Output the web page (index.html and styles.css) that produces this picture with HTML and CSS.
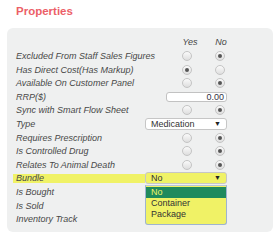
FILE: index.html
```html
<!DOCTYPE html>
<html lang="en">
<head>
    <meta charset="UTF-8">
    <meta name="viewport" content="width=device-width, initial-scale=1.0">
    <title>Properties</title>
    <link rel="stylesheet" href="styles.css">
</head>
<body>
    <h2 class="title">Properties</h2>
    <div class="panel">
        <div class="row head">
            <span class="hd yes">Yes</span>
            <span class="hd no">No</span>
        </div>
        <div class="row">
            <span class="label">Excluded From Staff Sales Figures</span>
            <span class="radio yes"></span>
            <span class="radio no on"></span>
        </div>
        <div class="row">
            <span class="label">Has Direct Cost(Has Markup)</span>
            <span class="radio yes on"></span>
            <span class="radio no"></span>
        </div>
        <div class="row">
            <span class="label">Available On Customer Panel</span>
            <span class="radio yes"></span>
            <span class="radio no on"></span>
        </div>
        <div class="row">
            <span class="label">RRP($)</span>
            <span class="num">0.00</span>
        </div>
        <div class="row">
            <span class="label">Sync with Smart Flow Sheet</span>
            <span class="radio yes"></span>
            <span class="radio no on"></span>
        </div>
        <div class="row">
            <span class="label">Type</span>
            <span class="sel">Medication <i class="arrow">&#9660;</i></span>
        </div>
        <div class="row">
            <span class="label">Requires Prescription</span>
            <span class="radio yes"></span>
            <span class="radio no on"></span>
        </div>
        <div class="row">
            <span class="label">Is Controlled Drug</span>
            <span class="radio yes"></span>
            <span class="radio no on"></span>
        </div>
        <div class="row">
            <span class="label">Relates To Animal Death</span>
            <span class="radio yes"></span>
            <span class="radio no on"></span>
        </div>
        <div class="row">
            <span class="label mark">Bundle</span>
            <span class="sel mark">No <i class="arrow">&#9660;</i>
                <span class="list">
                    <span class="opt picked">No</span>
                    <span class="opt">Container</span>
                    <span class="opt">Package</span>
                </span>
            </span>
        </div>
        <div class="row">
            <span class="label">Is Bought</span>
        </div>
        <div class="row">
            <span class="label">Is Sold</span>
        </div>
        <div class="row">
            <span class="label">Inventory Track</span>
        </div>
    </div>
</body>
</html>
```

FILE: styles.css
```css
body { margin: 0; background: #fff; font-family: "Liberation Sans", Arial, sans-serif; }
.title {
    margin: 0;
    padding: 5px 0 0 16px;
    font-size: 11.5px;
    line-height: 13px;
    color: #ec5f68;
}
.panel {
    margin: 10px 0 0 7px;
    width: 266px;
    padding: 7.6px 0 6px 9px;
    box-sizing: border-box;
    background: #eff0f0;
    border-radius: 6px;
}
.row {
    display: grid;
    grid-template-columns: 129px 37px 10px 23px 10px 2px;
    height: 13.6px;
    align-items: center;
    font-size: 9px;
}
.label {
    grid-column: 1;
    white-space: nowrap;
    font-style: italic;
    color: #484848;
}
.hd { font-style: italic; color: #444; justify-self: center; }
.hd.yes { padding-left: 6px; }
.hd.no { padding-left: 2px; }
.yes { grid-column: 3; }
.no { grid-column: 5; }
.radio {
    width: 10px;
    height: 10px;
    box-sizing: border-box;
    border: 1px solid #c4c4c4;
    border-radius: 50%;
    background: linear-gradient(#fafafa, #dedede);
    display: flex;
    align-items: center;
    justify-content: center;
}
.radio.on::after {
    content: "";
    width: 4px;
    height: 4px;
    border-radius: 50%;
    background: #555;
}
.num {
    grid-column: 2 / 7;
    justify-self: end;
    width: 61px;
    height: 10px;
    line-height: 9px;
    box-sizing: border-box;
    border: 1px solid #c2c2c2;
    border-radius: 3px;
    background: #fff;
    text-align: right;
    padding-right: 2px;
    color: #334;
}
.sel {
    grid-column: 2 / 7;
    position: relative;
    height: 12px;
    line-height: 10px;
    box-sizing: border-box;
    border: 1px solid #c6c6c6;
    border-radius: 3px;
    background: #fff;
    padding-left: 5px;
    color: #333;
}
.arrow {
    position: absolute;
    right: 5px;
    top: 0;
    font-style: normal;
    font-size: 7px;
    color: #222;
}
.mark { background: #f0f266; }
.label.mark {
    margin-left: -3px;
    padding-left: 3px;
    height: 9.5px;
    line-height: 9.5px;
}
.list {
    position: absolute;
    left: -1px;
    right: -1px;
    top: 12px;
    height: 40px;
    box-sizing: border-box;
    border: 1px solid #9fb4cf;
    border-top-color: #b9c6d6;
    border-radius: 0 0 3px 3px;
    background: #f0f266;
    padding-top: 1px;
    display: flex;
    flex-direction: column;
}
.opt {
    height: 11px;
    line-height: 11px;
    padding-left: 5px;
    color: #333;
}
.opt.picked { background: #1f8a5d; color: #f0f266; }
```
